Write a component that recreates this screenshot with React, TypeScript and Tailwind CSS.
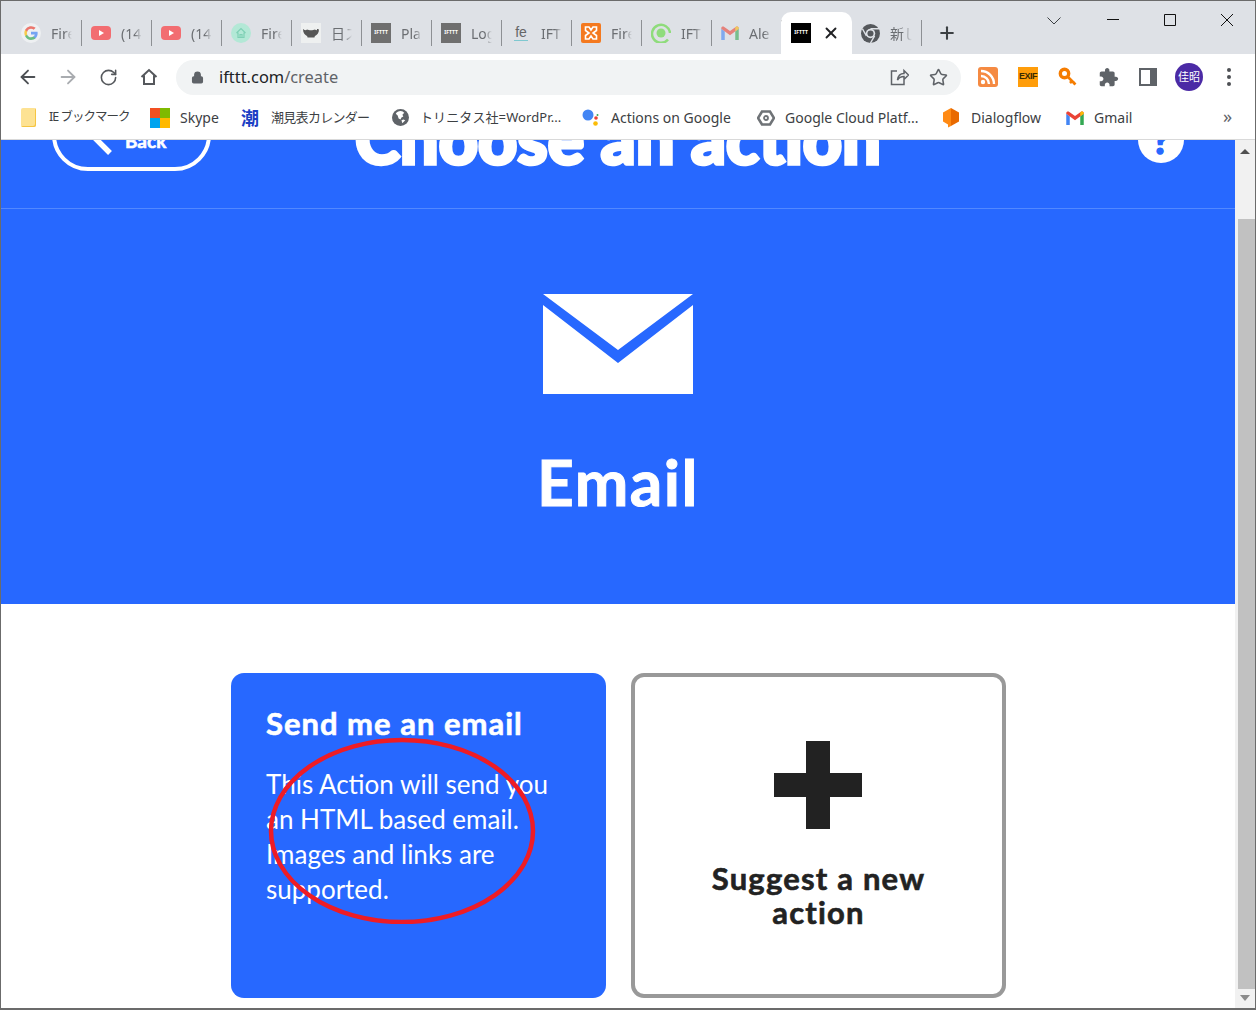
import React from 'react';
import { ArrowLeft, ArrowRight, RotateCw, Star, Lock, Plus, X } from 'lucide-react';

const IftttIcon = ({ dark }: { dark?: boolean }) => (
  <span className={`flex h-5 w-5 shrink-0 items-center justify-center text-[5px] font-bold text-white ${dark ? 'bg-black' : 'bg-[#6f6f6f]'}`}>
    IFTTT
  </span>
);

const GoogleG = () => (
  <span className="flex h-5 w-5 shrink-0 items-center justify-center rounded-full bg-[#eef0f2]">
    <svg viewBox="0 0 24 24" className="h-4 w-4 opacity-70">
      <path fill="#4285F4" d="M22 12.200c0-.7-.1-1.400-.2-2H12v3.900h5.600a4.800 4.800 0 0 1-2.100 3.100v2.600h3.400c2-1.800 3.100-4.500 3.100-7.600z" />
      <path fill="#34A853" d="M12 22.500c2.800 0 5.200-.9 6.900-2.500l-3.400-2.600c-.9.600-2.100 1-3.500 1-2.700 0-5-1.800-5.800-4.300H3.200v2.700a10.500 10.500 0 0 0 8.800 5.700z" />
      <path fill="#FBBC05" d="M6.200 14.100a6.300 6.300 0 0 1 0-4.100V7.300H3.200a10.500 10.500 0 0 0 0 9.400z" />
      <path fill="#EA4335" d="M12 5.600c1.500 0 2.900.5 4 1.500l3-3A10.500 10.500 0 0 0 3.200 7.300l3 2.700C7 7.400 9.300 5.600 12 5.600z" />
    </svg>
  </span>
);

const YoutubeIcon = () => (
  <svg viewBox="0 0 20 20" className="h-5 w-5 shrink-0">
    <rect x="0" y="3" width="20" height="14" rx="4" fill="#f26d71" />
    <path d="M8 7l5 3-5 3z" fill="#fff" />
  </svg>
);

const GmailIcon = ({ faded }: { faded?: boolean }) => (
  <svg viewBox="0 0 20 16" className={`h-[14px] w-[18px] shrink-0 ${faded ? 'opacity-60' : ''}`}>
    <path d="M0 3v13h4V6z" fill="#4285F4" />
    <path d="M20 3v13h-4V6z" fill="#34A853" />
    <path d="M0 3l10 7.500L20 3v-.500C20 .500 18 0 16.500 1L10 5.800 3.500 1C2 0 0 .500 0 2.500z" fill="#EA4335" />
    <path d="M16 6l4-3v-.500C20 .500 18 0 16.500 1L16 1.400z" fill="#FBBC05" />
  </svg>
);

const tabs: { label: string; icon: React.ReactNode }[] = [
  { label: 'Fire', icon: <GoogleG /> },
  { label: '(14', icon: <YoutubeIcon /> },
  { label: '(14', icon: <YoutubeIcon /> },
  {
    label: 'Fire',
    icon: (
      <span className="flex h-5 w-5 shrink-0 items-center justify-center rounded-full bg-[#b3e8d6]">
        <svg viewBox="0 0 12 12" className="h-3 w-3" fill="none" stroke="#7fd0b5" strokeWidth="1.200">
          <path d="M1.500 6L6 1.500 10.500 6M3 5.500V10.500H9V5.500M5 10.500V7.500H7V10.500" />
        </svg>
      </span>
    ),
  },
  {
    label: '日ス',
    icon: (
      <span className="flex h-5 w-5 shrink-0 items-center justify-center bg-[#eef0f0]">
        <svg viewBox="0 0 20 20" className="h-5 w-5">
          <path d="M2 6c2 1.500 3 1.500 4 .5 2 1 6 1 8 0 1 1 2 1 4-.5 0 4-2 6-4 7l-1 2-1-1-1 1-1-1-1 1-1-1-1 1-1-2C4 12 2 10 2 6z" fill="#555" />
        </svg>
      </span>
    ),
  },
  { label: 'Pla', icon: <IftttIcon /> },
  { label: 'Log', icon: <IftttIcon /> },
  {
    label: 'IFT',
    icon: (
      <span className="flex h-5 w-5 shrink-0 flex-col items-center justify-center font-['Liberation_Sans',sans-serif] text-[14px] leading-[15px] text-[#666]">
        fe
        <span className="h-px w-[14px] bg-[#7fc8d0]" />
      </span>
    ),
  },
  {
    label: 'Fire',
    icon: (
      <span className="flex h-5 w-5 shrink-0 items-center justify-center rounded-[2px] bg-[#f4791f]">
        <svg viewBox="0 0 16 16" className="h-4 w-4" fill="none" stroke="#fff" strokeWidth="1.600">
          <path d="M6 2H2.500v3.500L6 8l-3.500 2.500V14H6l2-3 2 3h3.500v-3.500L10 8l3.500-2.500V2H10L8 5z" />
        </svg>
      </span>
    ),
  },
  {
    label: 'IFT',
    icon: (
      <svg viewBox="0 0 20 20" className="h-5 w-5 shrink-0">
        <path d="M17 16.500A9 9 0 1 1 19 10" fill="none" stroke="#8fdc7c" strokeWidth="2.500" />
        <circle cx="10" cy="10" r="4.500" fill="#8fdc7c" />
      </svg>
    ),
  },
  { label: 'Ale', icon: <GmailIcon faded /> },
];

const bookmarks: { label: string; width: string; text: string; icon: React.ReactNode }[] = [
  {
    label: 'IE ブックマーク',
    width: 'w-[129px]',
    text: 'text-[12.5px] tracking-[-1px]',
    icon: (
      <span className="mr-[13px] block h-[19px] w-[15px] rounded-[2px] bg-[#fde293] shadow-[inset_-1px_-1px_0_#f5c542]" />
    ),
  },
  {
    label: 'Skype',
    width: 'w-[91px]',
    text: '',
    icon: (
      <span className="mr-[10px] grid h-5 w-5 grid-cols-2 gap-0">
        <span className="bg-[#f25022]" />
        <span className="bg-[#7fba00]" />
        <span className="bg-[#00a4ef]" />
        <span className="bg-[#ffb900]" />
      </span>
    ),
  },
  {
    label: '潮見表カレンダー',
    width: 'w-[151px]',
    text: 'text-[13px] tracking-[-0.7px]',
    icon: <span className="mr-3 text-[18px] font-bold leading-5 text-[#1c3fc4]">潮</span>,
  },
  {
    label: 'トリニタス社=WordPr...',
    width: 'w-[190px]',
    text: 'text-[13px] tracking-[0.1px]',
    icon: (
      <svg viewBox="0 0 18 18" className="mr-[11px] h-[17px] w-[17px]">
        <circle cx="9" cy="9" r="9" fill="#5f6368" />
        <path d="M9 2c-2 0-4 1-5 3l2 2 1 3 2 1 1-2 2-1-1-2 2-2C12 3 11 2 9 2zM12 11l-2 1 1 3 3-3z" fill="#fff" />
      </svg>
    ),
  },
  {
    label: 'Actions on Google',
    width: 'w-[175px]',
    text: '',
    icon: (
      <svg viewBox="0 0 18 20" className="mr-[11px] h-5 w-[18px]">
        <circle cx="6" cy="7" r="5.500" fill="#4285F4" />
        <circle cx="14" cy="10" r="1.800" fill="#EA4335" />
        <circle cx="13.500" cy="15.500" r="2.300" fill="#FBBC05" />
        <circle cx="15.500" cy="7" r="1" fill="#34A853" />
      </svg>
    ),
  },
  {
    label: 'Google Cloud Platf...',
    width: 'w-[186px]',
    text: '',
    icon: (
      <svg viewBox="0 0 18 18" className="mr-[10px] h-[18px] w-[18px]" fill="none" stroke="#6f7377" strokeWidth="2.600">
        <path d="M5 2.500h8L17 9l-4 6.500H5L1 9z" />
        <circle cx="9" cy="9" r="2" strokeWidth="1.800" />
      </svg>
    ),
  },
  {
    label: 'Dialogflow',
    width: 'w-[123px]',
    text: '',
    icon: (
      <svg viewBox="0 0 16 20" className="mr-3 h-5 w-4">
        <path d="M8 0l8 4.500v9L8 18v-9z" fill="#e96a00" />
        <path d="M8 0L0 4.500v9l5 3v3l3-1.500V9z" fill="#ff8a14" />
      </svg>
    ),
  },
  {
    label: 'Gmail',
    width: 'w-[160px]',
    text: '',
    icon: <span className="mr-[10px]"><GmailIcon /></span>,
  },
];

const WindowControls = () => (
  <div className="flex h-[53px] w-[231px] items-start pt-[12px]">
    <div className="flex w-[60px] justify-center">
      <svg viewBox="0 0 14 14" className="h-[14px] w-[14px]" fill="none" stroke="#3c4043"><path d="M0.500 4.500L7 11l6.500-6.500" /></svg>
    </div>
    <div className="flex w-[57px] justify-center">
      <svg viewBox="0 0 14 14" className="h-[14px] w-[14px]" fill="none" stroke="#111"><path d="M1 6.500h12" /></svg>
    </div>
    <div className="flex w-[57px] justify-center">
      <svg viewBox="0 0 14 14" className="h-[14px] w-[14px]" fill="none" stroke="#111"><path d="M1.500 1.500h11v11h-11z" /></svg>
    </div>
    <div className="flex w-[57px] justify-center">
      <svg viewBox="0 0 14 14" className="h-[14px] w-[14px]" fill="none" stroke="#111"><path d="M1 1l12 12M13 1L1 13" /></svg>
    </div>
  </div>
);

const ExtensionIcons = () => (
  <div className="flex flex-1 items-center pl-[7px]">
    <div className="flex w-10 justify-center">
      <svg viewBox="0 0 20 20" className="h-5 w-5">
        <rect width="20" height="20" rx="3" fill="#f58a42" />
        <circle cx="5" cy="15" r="2.200" fill="#fff" />
        <path d="M3 9a8 8 0 0 1 8 8M3 4a13 13 0 0 1 13 13" fill="none" stroke="#fff" strokeWidth="2.400" />
      </svg>
    </div>
    <div className="flex w-10 justify-center">
      <span className="flex h-5 w-5 items-center justify-center bg-[#ff9d0a] font-['Liberation_Sans',sans-serif] text-[9px] font-bold tracking-[-0.5px] text-[#3a2a00]">
        EXIF
      </span>
    </div>
    <div className="flex w-10 justify-center">
      <svg viewBox="0 0 20 20" className="h-5 w-5" fill="none" stroke="#f57c00">
        <circle cx="6.500" cy="6.500" r="4.200" strokeWidth="3.400" />
        <path d="M9.500 9.500l8 8M14 14l-2 2M17 15l-2 2" strokeWidth="2.600" />
      </svg>
    </div>
    <div className="flex w-10 justify-center">
      <svg viewBox="0 0 24 24" className="h-[21px] w-[21px]" fill="#5f6368">
        <path d="M20.500 11H19V7c0-1.100-.9-2-2-2h-4V3.500C13 2.120 11.880 1 10.500 1S8 2.120 8 3.500V5H4c-1.100 0-1.990.9-1.990 2v3.800H3.500c1.490 0 2.700 1.210 2.700 2.700s-1.210 2.700-2.700 2.700H2V20c0 1.100.9 2 2 2h3.800v-1.500c0-1.490 1.210-2.700 2.700-2.700 1.490 0 2.700 1.210 2.700 2.700V22H17c1.100 0 2-.9 2-2v-4h1.500c1.380 0 2.500-1.120 2.500-2.500S21.880 11 20.500 11z" />
      </svg>
    </div>
    <div className="flex w-10 justify-center">
      <span className="flex h-[18px] w-[18px] items-center justify-end border-2 border-[#5f6368]">
        <span className="h-full w-[5px] bg-[#5f6368]" />
      </span>
    </div>
    <div className="ml-[1px] flex w-10 justify-center">
      <span className="flex h-7 w-7 items-center justify-center rounded-full bg-[#4b2aa5] text-[11px] text-white">佳昭</span>
    </div>
    <div className="flex w-10 flex-col items-center gap-[3px]">
      <span className="h-[4px] w-[4px] rounded-full bg-[#4d5054]" />
      <span className="h-[4px] w-[4px] rounded-full bg-[#4d5054]" />
      <span className="h-[4px] w-[4px] rounded-full bg-[#4d5054]" />
    </div>
  </div>
);

const BrowserChrome = () => (
  <div className="font-['Noto_Sans','Noto_Sans_CJK_JP',sans-serif]">
    {/* tab strip */}
    <div className="flex h-[53px] items-end bg-[#dee1e6] pl-[11px]">
      {tabs.map((tab, i) => (
        <div key={i} className="flex h-[42px] w-[70px] shrink-0 items-center pl-[9px]">
          {tab.icon}
          <span className="ml-[10px] flex-1 overflow-hidden whitespace-nowrap text-[14px] text-[#6b6e72] [mask-image:linear-gradient(90deg,#000_65%,transparent)]">
            {tab.label}
          </span>
          <span className="ml-[9px] h-[26px] w-px shrink-0 bg-[#8d9094]" />
        </div>
      ))}
      <div className="-ml-px flex h-[42px] w-[71px] shrink-0 items-center rounded-t-[10px] bg-white pl-[10px]">
        <IftttIcon dark />
        <X className="ml-[11px] h-[18px] w-[18px] text-[#202124]" strokeWidth={2.500} />
      </div>
      <div className="flex h-[42px] w-[70px] shrink-0 items-center pl-[9px]">
        <svg viewBox="0 0 20 20" className="h-[19px] w-[19px] shrink-0" fill="none">
          <circle cx="10" cy="10" r="10" fill="#55585c" />
          <circle cx="10" cy="10" r="5" fill="#dee1e6" />
          <circle cx="10" cy="10" r="3.200" fill="#55585c" />
          <path d="M10 5h9M5.700 12.500L1.500 5M14.300 12.500L10 20" stroke="#dee1e6" strokeWidth="1.500" />
        </svg>
        <span className="ml-[10px] flex-1 overflow-hidden whitespace-nowrap text-[14px] text-[#6b6e72] [mask-image:linear-gradient(90deg,#000_55%,transparent)]">新し</span>
        <span className="ml-[9px] h-[26px] w-px shrink-0 bg-[#8d9094]" />
      </div>
      <div className="flex h-[42px] flex-1 items-center pl-[15px]">
        <Plus className="h-[20px] w-[20px] text-[#3c4043]" strokeWidth={2.500} />
      </div>
      <WindowControls />
    </div>

    {/* toolbar */}
    <div className="flex h-[46px] items-center bg-white text-[#5f6368]">
      <div className="flex w-[175px] shrink-0 items-center pl-[16px]">
        <ArrowLeft className="h-[22px] w-[22px] text-[#4d5054]" strokeWidth={2} />
        <ArrowRight className="ml-[18px] h-[22px] w-[22px] text-[#a9acb0]" strokeWidth={2} />
        <RotateCw className="ml-[20px] h-[19px] w-[19px] text-[#55585c]" strokeWidth={2} />
        <svg viewBox="0 0 20 20" className="ml-[21px] h-5 w-5" fill="none" stroke="#55585c" strokeWidth="2">
          <path d="M2.500 10L10 3l7.500 7M5 8.500V17h10V8.500" />
        </svg>
      </div>
      <div className="flex h-[35px] w-[785px] shrink-0 items-center rounded-full bg-[#f1f3f4] pl-[15px] pr-[13px]">
        <Lock className="h-[13px] w-[13px] fill-[#5f6368] text-[#5f6368]" strokeWidth={2.500} />
        <span className="ml-[15px] flex-1 text-[16.400px] text-[#202124]">
          ifttt.com<span className="text-[#5f6368]">/create</span>
        </span>
        <svg viewBox="0 0 20 20" className="mr-[20px] h-5 w-5" fill="none" stroke="#5f6368" strokeWidth="1.500">
          <path d="M8 4H2.500v13.500H15V13M8.500 13c.5-4 3-6.500 6.500-6.500V3.500L19.500 8 15 12.500V9.500c-3 0-5 1-6.500 3.500z" />
        </svg>
        <Star className="h-[19px] w-[19px]" strokeWidth={2} />
      </div>
      <ExtensionIcons />
    </div>

    {/* bookmarks */}
    <div className="flex h-[40px] items-center border-b border-[#d9d9d9] bg-white pb-[4px] pl-[20px] text-[14px] text-[#3c4043]">
      {bookmarks.map((b) => (
        <div key={b.label} className={`flex shrink-0 items-center whitespace-nowrap ${b.width}`}>
          {b.icon}
          <span className={b.text}>{b.label}</span>
        </div>
      ))}
      <span className="-ml-[3px] -mt-[4px] text-[18px] leading-none text-[#5f6368]">»</span>
    </div>
  </div>
);

const PageScrollbar = () => (
  <div className="flex w-[20px] shrink-0 flex-col items-center bg-[#f1f1f1]">
    <div className="mt-[9px] h-0 w-0 border-x-[5px] border-b-[5px] border-x-transparent border-b-[#505050]" />
    <div className="ml-[2px] mt-[65px] h-[770px] w-[17px] bg-[#c1c1c1]" />
    <div className="mt-[6px] h-0 w-0 border-x-[5px] border-t-[6px] border-x-transparent border-t-[#8a8a8a]" />
  </div>
);

const PageContent = () => (
  <div className="min-w-0 flex-1 bg-white font-['Lato',sans-serif]">
    <div className="bg-[#2768ff] text-white">
      {/* page is scrolled: the top of this bar sits under the browser chrome */}
      <div className="flex h-[69px] items-end justify-between overflow-hidden border-b border-[#5288ff] px-[51px] pb-[37px]">
        <div className="flex h-[72px] w-[159px] shrink-0 items-center rounded-[36px] border-[4px] border-white pl-[32px]">
          <svg viewBox="0 0 24 44" className="h-[44px] w-[24px] shrink-0" fill="none" stroke="#fff" strokeWidth="5.500">
            <path d="M22 40L4 22 22 4" />
          </svg>
          <span className="ml-[13px] mt-[12px] text-[19px] font-bold [-webkit-text-stroke:0.6px_white]">Back</span>
        </div>
        <div className="-mb-[3px] text-[68px] font-black leading-[72px] tracking-[0.2px] whitespace-nowrap [-webkit-text-stroke:3.500px_white]">
          Choose an action
        </div>
        <div className="mb-[8px] flex w-[159px] shrink-0 justify-end">
          <div className="flex h-[46px] w-[46px] items-center justify-center rounded-full bg-white text-[36px] font-black leading-none text-[#2768ff] [-webkit-text-stroke:1.500px_#2768ff]">?</div>
        </div>
      </div>
      <div className="flex h-[395px] flex-col items-center pt-[85px]">
        <svg viewBox="0 0 150 100" className="h-[100px] w-[150px]">
          <path d="M0 0h150v100H0z" fill="#fff" />
          <path d="M0 0L75 56 150 0V11L75 69 0 11z" fill="#2768ff" />
        </svg>
        <h1 className="mt-[49px] text-[64px] font-bold leading-[78px] tracking-[1.500px] [-webkit-text-stroke:1px_white]">Email</h1>
      </div>
    </div>
    <div className="flex justify-center gap-[25px] pl-[1px] pt-[69px]">
      <div className="relative h-[325px] w-[375px] rounded-[13px] bg-[#2768ff] px-[35px] pt-[30px] text-white">
        <h2 className="text-[31px] font-bold leading-[40px] tracking-[1px] whitespace-nowrap [-webkit-text-stroke:0.6px_white]">Send me an email</h2>
        <p className="mt-[24px] text-[26px] leading-[35px]">This Action will send you an HTML based email. Images and links are supported.</p>
        <svg viewBox="0 0 270 188" className="absolute left-[37px] top-[63px] h-[188px] w-[270px]" fill="none">
          <ellipse cx="134" cy="95" rx="131" ry="91" stroke="#ee1c25" strokeWidth="4.500" />
        </svg>
      </div>
      <div className="flex h-[325px] w-[375px] flex-col items-center rounded-[13px] border-[4px] border-[#999999] pt-[64px] text-[#222222]">
        <div className="relative -ml-[2px] h-[88px] w-[88px]">
          <span className="absolute left-[32px] top-0 h-[88px] w-[24px] bg-[#222222]" />
          <span className="absolute left-0 top-[32px] h-[24px] w-[88px] bg-[#222222]" />
        </div>
        <p className="mt-[32px] w-[260px] text-center text-[31px] font-bold leading-[34px] tracking-[1.200px] [-webkit-text-stroke:0.6px_#222222]">Suggest a new action</p>
      </div>
    </div>
  </div>
);

export default function App() {
  return (
    <div className="flex h-[1010px] w-[1256px] flex-col overflow-hidden border-x border-t border-b-2 border-x-[#6b6b6b] border-t-[#6b6b6b] border-b-[#6b6b6b] bg-white">
      <BrowserChrome />
      <div className="flex min-h-0 flex-1">
        <PageContent />
        <PageScrollbar />
      </div>
    </div>
  );
}
